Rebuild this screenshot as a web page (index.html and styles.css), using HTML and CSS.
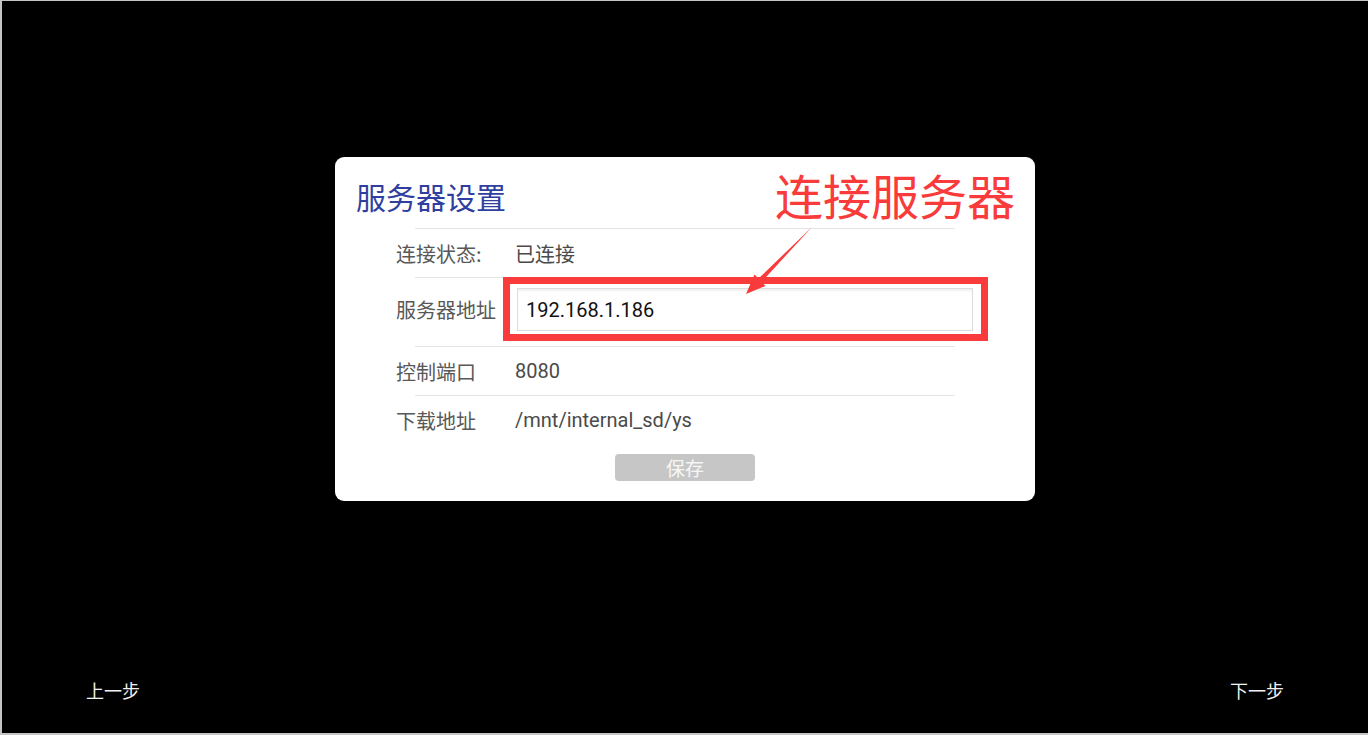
FILE: index.html
```html
<!DOCTYPE html>
<html lang="zh-CN">
<head>
<meta charset="utf-8">
<title>服务器设置</title>
<link rel="stylesheet" href="styles.css">
</head>
<body>
<div class="screen">
  <main class="stage">
    <section class="dialog">
      <h1 class="dialog-title">服务器设置</h1>
      <div class="sep"></div>
      <div class="row">
        <span class="label">连接状态:</span>
        <span class="value">已连接</span>
      </div>
      <div class="sep"></div>
      <div class="row row-input">
        <span class="label">服务器地址</span>
        <input class="field" type="text" value="192.168.1.186">
      </div>
      <div class="sep"></div>
      <div class="row">
        <span class="label">控制端口</span>
        <span class="value">8080</span>
      </div>
      <div class="sep"></div>
      <div class="row">
        <span class="label">下载地址</span>
        <span class="value">/mnt/internal_sd/ys</span>
      </div>
      <div class="actions">
        <button class="save" type="button">保存</button>
      </div>

      <span class="note">连接服务器</span>
      <svg class="annot" viewBox="335 157 700 344" width="700" height="344" aria-hidden="true">
        <rect x="506.5" y="280.5" width="478" height="57" fill="none" stroke="#f93b3b" stroke-width="7"/>
        <polygon points="812,227 761.5,282 765.5,286 746,294 754.5,274.5 758.5,278.5" fill="#f93b3b"/>
      </svg>
    </section>
  </main>
  <footer class="nav">
    <span class="nav-btn">上一步</span>
    <span class="nav-btn">下一步</span>
  </footer>
</div>
</body>
</html>
```

FILE: styles.css
```css
* { box-sizing: border-box; }

html, body {
  margin: 0;
  padding: 0;
  background: #000;
}

body {
  font-family: Roboto, "Noto Sans CJK SC", sans-serif;
}

.screen {
  width: 1368px;
  height: 735px;
  background: #000;
  border-top: 1px solid #c4c4c4;
  border-left: 2px solid #c4c4c4;
  border-bottom: 2px solid #c4c4c4;
  display: flex;
  flex-direction: column;
}

.stage {
  flex: 1;
  display: flex;
  justify-content: center;
  align-items: flex-start;
  padding-top: 156px;
}

.dialog {
  position: relative;
  width: 700px;
  height: 344px;
  background: #fff;
  border-radius: 9px;
  display: flex;
  flex-direction: column;
}

.dialog-title {
  margin: 0;
  padding: 24px 0 17px 21px;
  font-family: "Noto Sans CJK SC", sans-serif;
  font-weight: 400;
  font-size: 30px;
  line-height: 30px;
  color: #303f9f;
}

.sep {
  height: 1px;
  background: #e4e4e4;
  margin: 0 80px;
}

.row {
  display: flex;
  align-items: center;
  height: 48px;
  padding-left: 61px;
  font-size: 20px;
  color: #555;
}

.row-input {
  height: 68px;
  padding-top: 10px;
  padding-bottom: 15px;
}

.label {
  width: 119px;
  font-family: "Noto Sans CJK SC", sans-serif;
  color: #585858;
}

.value {
  font-family: Roboto, "Noto Sans CJK SC", sans-serif;
  color: #4a4a4a;
}

.field {
  margin: 0 0 0 2px;
  width: 456px;
  height: 43px;
  border: 1px solid #dcdcdc;
  box-shadow: inset 0 2px 2px rgba(0, 0, 0, 0.06);
  padding: 1px 8px 0 8px;
  font-family: Roboto, sans-serif;
  font-size: 20px;
  color: #111;
  background: #fff;
  outline: none;
}

.actions {
  display: flex;
  justify-content: center;
  padding-top: 10px;
}

.save {
  width: 140px;
  height: 27px;
  border: 0;
  border-radius: 4px;
  background: #c6c6c6;
  color: #f6f6f6;
  font-family: "Noto Sans CJK SC", sans-serif;
  font-size: 19px;
  line-height: 27px;
  padding: 0;
}

.note {
  position: absolute;
  top: 13px;
  right: 20px;
  font-family: "Noto Sans CJK SC", sans-serif;
  font-weight: 400;
  font-size: 48px;
  line-height: 48px;
  color: #f93b3b;
}

.annot {
  position: absolute;
  left: 0;
  top: 0;
  pointer-events: none;
}

.nav {
  display: flex;
  justify-content: space-between;
  padding: 0 84px 34px 84px;
}

.nav-btn {
  font-family: "Noto Sans CJK SC", sans-serif;
  font-size: 18px;
  line-height: 18px;
  color: #f2f2f2;
}
```
